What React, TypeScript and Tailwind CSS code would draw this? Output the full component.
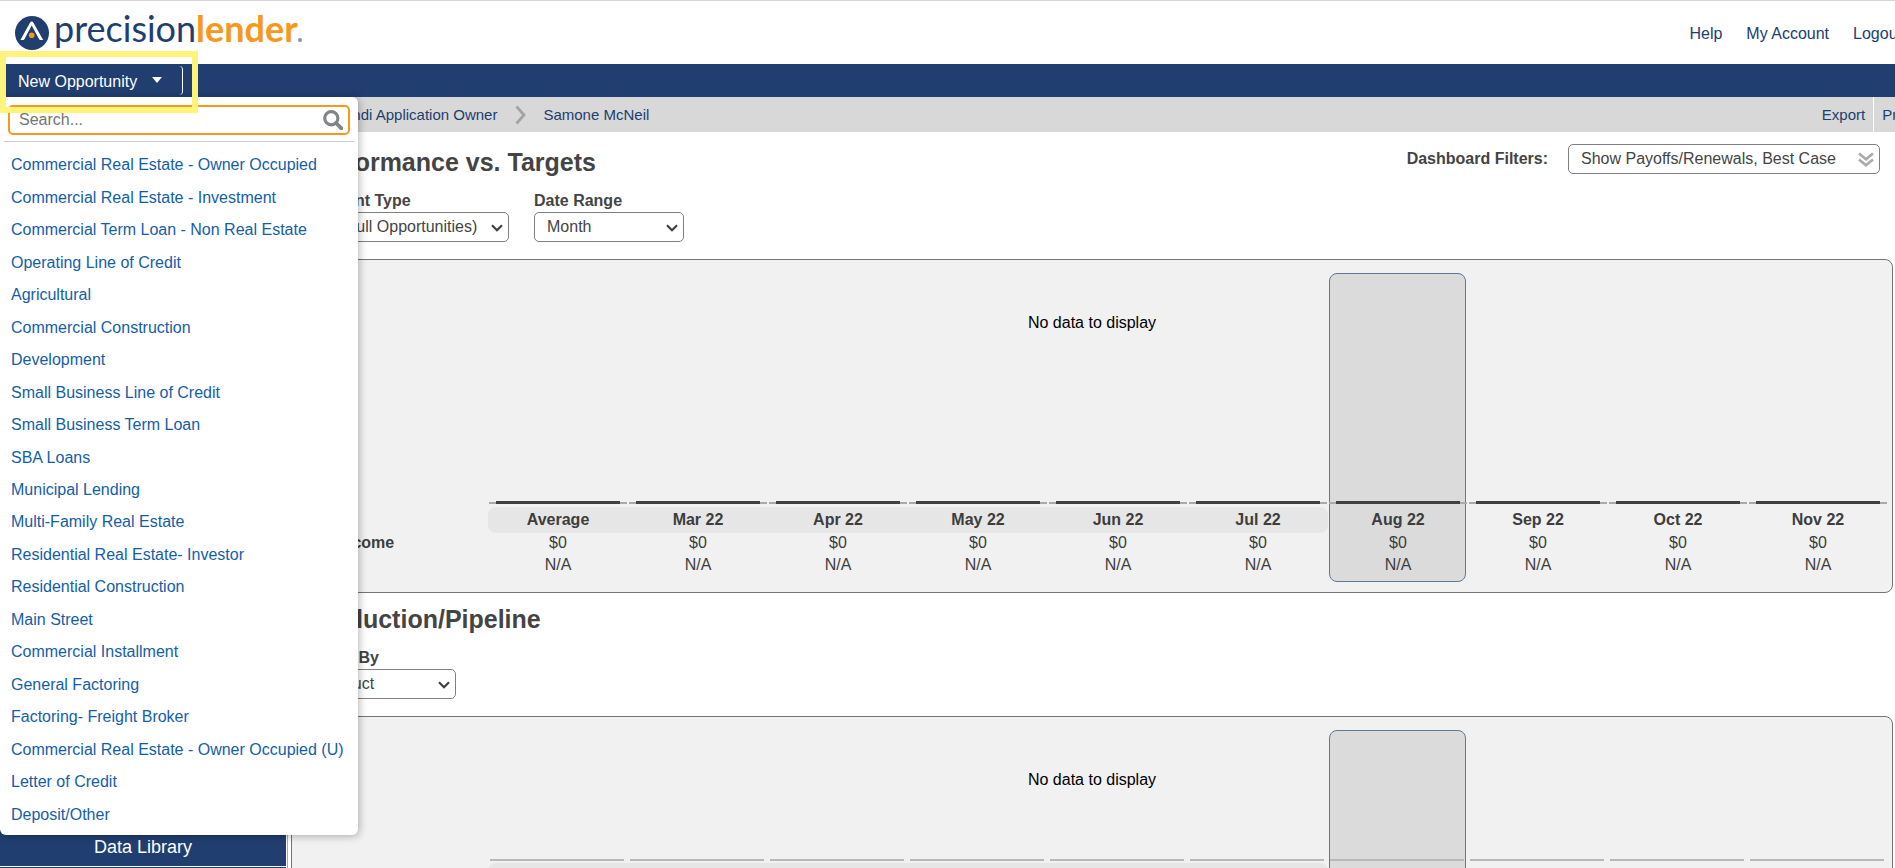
import React, { useState } from 'react';

const products = [
  'Commercial Real Estate - Owner Occupied',
  'Commercial Real Estate - Investment',
  'Commercial Term Loan - Non Real Estate',
  'Operating Line of Credit',
  'Agricultural',
  'Commercial Construction',
  'Development',
  'Small Business Line of Credit',
  'Small Business Term Loan',
  'SBA Loans',
  'Municipal Lending',
  'Multi-Family Real Estate',
  'Residential Real Estate- Investor',
  'Residential Construction',
  'Main Street',
  'Commercial Installment',
  'General Factoring',
  'Factoring- Freight Broker',
  'Commercial Real Estate - Owner Occupied (U)',
  'Letter of Credit',
  'Deposit/Other',
];

const periods = ['Average', 'Mar 22', 'Apr 22', 'May 22', 'Jun 22', 'Jul 22', 'Aug 22', 'Sep 22', 'Oct 22', 'Nov 22'];
const currentIndex = 6;

const Logo: React.FC = () => (
  <a href="#" aria-label="precisionlender" className="flex items-center">
    <svg className="h-[34px] w-[34px]" viewBox="0 0 34 34" aria-hidden="true">
      <circle cx="17" cy="17" r="17" fill="#203e70" />
      <path d="M5.4 24 14.8 7q.8-1.4 1.9-1.4T18.6 7L28.2 24h-3q-.6 0-1-.8L16.7 9.6 9.4 23.2q-.4.8-1 .8z" fill="#fff" />
      <circle cx="16.7" cy="19.2" r="2.8" fill="#f7981c" />
    </svg>
    <span className="mb-[10px] ml-[5px] flex items-baseline font-[Lato,sans-serif] text-[36px] leading-9">
      <span className="text-[#203e70]">precision</span>
      <span className="font-bold text-[#f7981c]">lender</span>
      <span className="h-1 w-1 rounded-full bg-[#8193b3]" />
    </span>
  </a>
);

interface SelectFieldProps {
  id: string;
  label: string;
  options: string[];
  wide?: boolean;
}

const SelectField: React.FC<SelectFieldProps> = ({ id, label, options, wide }) => (
  <div className="flex flex-col gap-px">
    <label htmlFor={id} className="font-bold leading-5">
      {label}
    </label>
    <div className={`relative ${wide ? 'w-[203px]' : 'w-[150px]'}`}>
      <select id={id} className="h-[30px] w-full appearance-none rounded-[5px] border border-[#808080] bg-white px-3">
        {options.map((o) => (
          <option key={o}>{o}</option>
        ))}
      </select>
      <svg
        className="pointer-events-none absolute top-3 right-[6px] h-2 w-3"
        viewBox="0 0 12 8"
        fill="none"
        stroke="#404040"
        strokeWidth="2.2"
        aria-hidden="true"
      >
        <path d="m1 1.2 5 5 5-5" />
      </svg>
    </div>
  </div>
);

interface ChartPanelProps {
  rowLabel: string;
  compact?: boolean;
}

const ChartPanel: React.FC<ChartPanelProps> = ({ rowLabel, compact }) => (
  <div className="relative mt-[17px] mr-[2px] rounded-lg border border-[#757575] bg-[#f1f1f1] pr-1 pb-4">
    <table className="w-full table-fixed border-collapse text-center text-[#3d3d3d]">
      <colgroup>
        <col className="w-[196px]" />
        {periods.map((p) => (
          <col key={p} />
        ))}
      </colgroup>
      <thead>
        <tr className={compact ? 'h-[146px]' : 'h-[247px]'}>
          <td />
          {periods.map((p, i) => (
            <td key={p} className="relative p-0 align-bottom">
              {i === currentIndex && (
                <div className="absolute top-[13px] right-[2px] left-[1px] h-[309px] rounded-lg border border-[#5f779f] bg-[#dbdbdb]" />
              )}
              {compact ? (
                <div className="relative mr-1 mb-[2px] ml-[2px] h-[2px] bg-[#b8b8b8]" />
              ) : (
                <div className="relative mr-px mb-[3px] ml-px flex h-[3px] items-center bg-[linear-gradient(#aaa,#aaa)] bg-[length:100%_2px] bg-center bg-no-repeat px-[7px]">
                  <div className="h-[3px] w-full bg-[#404040]" />
                </div>
              )}
            </td>
          ))}
        </tr>
        <tr className="h-[26px]">
          <td />
          {periods.map((p, i) => (
            <th
              key={p}
              scope="col"
              className={`relative p-0 font-bold leading-[26px] ${i < currentIndex ? 'bg-[#e6e6e6]' : ''} ${
                i === 0 ? 'rounded-l-lg' : ''
              } ${i === currentIndex - 1 ? 'rounded-r-lg' : ''}`}
            >
              {p}
            </th>
          ))}
        </tr>
      </thead>
      <tbody>
        <tr className="h-5 leading-5">
          <th scope="row" className="p-0 pl-4 text-left font-bold">
            {rowLabel}
          </th>
          {periods.map((p) => (
            <td key={p} className="relative p-0">
              $0
            </td>
          ))}
        </tr>
        <tr className="h-[23px] leading-[23px]">
          <td />
          {periods.map((p) => (
            <td key={p} className="relative p-0">
              N/A
            </td>
          ))}
        </tr>
      </tbody>
    </table>
    <p className="absolute inset-x-0 top-[53px] text-center leading-5 text-black">No data to display</p>
  </div>
);

const OpportunityMenu: React.FC = () => {
  const [query, setQuery] = useState('');
  const visible = products.filter((p) => p.toLowerCase().includes(query.toLowerCase()));

  return (
    <div className="absolute top-full left-0 z-20 w-[358px] rounded-md rounded-tl-none bg-white pt-2 pb-1 shadow-[1px_1px_8px_rgba(0,0,0,0.3)]">
      <div className="mr-2 ml-2 flex h-[30px] items-center rounded-[5px] border-2 border-[#f7981c] pr-[5px] pl-[9px]">
        <input
          type="text"
          aria-label="Search products"
          placeholder="Search..."
          value={query}
          onChange={(e) => setQuery(e.target.value)}
          className="min-w-0 flex-1 bg-transparent text-base text-[#444] outline-none placeholder:text-[#757575]"
        />
        <svg className="h-5 w-5" viewBox="0 0 20 20" fill="none" stroke="#828587" aria-hidden="true">
          <circle cx="8.3" cy="8.3" r="6.6" strokeWidth="3.2" />
          <path d="m13 13 5.4 5.4" strokeWidth="3.8" strokeLinecap="round" />
        </svg>
      </div>
      <hr className="mx-1 mt-[6px] border-[#ccc]" />
      <ul className="mt-[7px] grid h-[682px] auto-rows-fr">
        {visible.map((p) => (
          <li key={p} className="flex items-center px-[11px]">
            <a href="#" className="whitespace-nowrap text-[#145ea8]">
              {p}
            </a>
          </li>
        ))}
      </ul>
    </div>
  );
};

const App: React.FC = () => {
  const [menuOpen, setMenuOpen] = useState(true);

  return (
    <div className="flex h-screen flex-col overflow-hidden bg-white font-['Liberation_Sans',Arial,sans-serif] text-base text-[#444]">
      <header className="flex h-16 shrink-0 items-center justify-between border-t border-[#d8d8d8] pl-[15px]">
        <Logo />
        <nav className="-mr-[7px] flex gap-6 pt-[2px] text-[#203e70]">
          <a href="#">Help</a>
          <a href="#">My Account</a>
          <a href="#">Logout</a>
        </nav>
      </header>

      <div className="relative z-10 flex h-[33px] shrink-0 bg-[#203e70] pl-[6px]">
        <button
          type="button"
          onClick={() => setMenuOpen(!menuOpen)}
          className="my-[2px] flex w-[177px] items-center rounded-[4px] border-r border-white pt-[2px] pl-3 text-white"
        >
          New Opportunity
          <svg className="mb-1 ml-[15px] h-[6px] w-[10px]" viewBox="0 0 10 6" fill="#fff" aria-hidden="true">
            <path d="M0 0h10L5 6z" />
          </svg>
        </button>
        {menuOpen && <OpportunityMenu />}
        <div className="pointer-events-none absolute -top-[13px] left-0 z-30 h-[62px] w-[198px] border-[6px] border-[#fff47b]" />
      </div>

      <div className="flex h-[35px] shrink-0 items-center justify-between bg-[#d8d8d8] text-[15px] text-[#203e70]">
        <div className="flex items-center pt-[2px] pl-[334px]">
          <a href="#">Sandi Application Owner</a>
          <svg className="mr-[17px] mb-[2px] ml-[18px] h-5 w-[11px]" viewBox="0 0 11 20" fill="none" stroke="#a3a3a3" strokeWidth="2.8" aria-hidden="true">
            <path d="m1.5 1.5 7.5 8.5-7.5 8.5" />
          </svg>
          <a href="#">Samone McNeil</a>
        </div>
        <div className="-mr-[26px] flex h-full items-center">
          <a href="#" className="flex h-full items-center border-r border-white px-2 pt-[2px]">
            Export
          </a>
          <a href="#" className="px-2 pt-[2px]">
            Print
          </a>
        </div>
      </div>

      <div className="flex min-h-0 flex-1">
        <aside className="flex w-[286px] shrink-0 flex-col justify-end gap-px overflow-hidden">
          <button type="button" className="h-[38px] shrink-0 bg-[#203e70] text-lg text-white">
            Data Library
          </button>
          <div className="h-px shrink-0 bg-[#203e70]" />
        </aside>

        <main className="ml-px min-w-0 flex-1 border-l border-[#aaa] pt-1 pl-[3px]">
          <section className="pt-2">
            <div className="flex items-start justify-between pr-[15px] pl-[15px]">
              <h2 className="text-[25px] font-bold leading-9">Performance vs. Targets</h2>
              <div className="flex items-center gap-5">
                <span id="filters-label" className="font-bold">
                  Dashboard Filters:
                </span>
                <button
                  type="button"
                  aria-labelledby="filters-label"
                  className="flex h-[30px] w-[312px] items-center justify-between rounded-[5px] border border-[#808080] bg-white pr-[5px] pl-3"
                >
                  Show Payoffs/Renewals, Best Case
                  <svg className="h-4 w-4" viewBox="0 0 16 16" fill="none" stroke="#aaa" strokeWidth="2.6" aria-hidden="true">
                    <path d="m1 2.5 7 5.8 7-5.8M1 8.5l7 5.8 7-5.8" />
                  </svg>
                </button>
              </div>
            </div>
            <div className="mt-[11px] flex gap-[25px] pl-[15px]">
              <SelectField id="account-type" label="Account Type" options={['All (Full Opportunities)']} wide />
              <SelectField id="date-range" label="Date Range" options={['Month', 'Quarter', 'Year']} />
            </div>
            <ChartPanel rowLabel="Net Income" />
          </section>

          <section className="pt-2">
            <h2 className="pl-[15px] text-[25px] font-bold leading-9">Production/Pipeline</h2>
            <div className="mt-[11px] flex pl-[15px]">
              <SelectField id="group-by" label="Group By" options={['Product', 'Officer']} />
            </div>
            <ChartPanel rowLabel="Production" compact />
          </section>
        </main>
      </div>
    </div>
  );
};

export default App;
